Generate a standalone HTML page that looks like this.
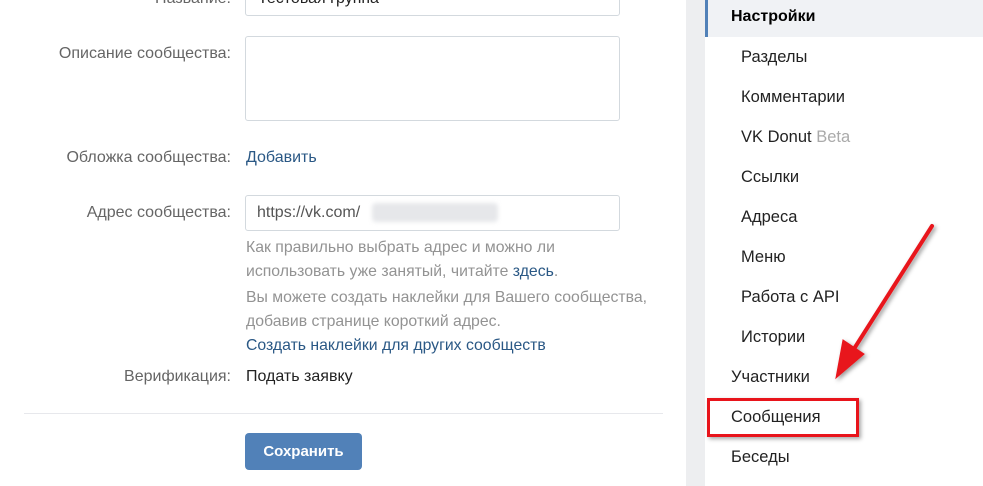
<!DOCTYPE html>
<html><head><meta charset="utf-8"><style>
*{margin:0;padding:0;box-sizing:border-box}
body{width:983px;height:486px;overflow:hidden;background:#fff;font-family:"Liberation Sans",sans-serif;font-size:16px;color:#000;position:relative}
.a{position:absolute;white-space:nowrap}
.lbl{color:#656565;text-align:right;width:231px;left:0}
.box{position:absolute;border:1px solid #d3d9de;border-radius:3px;background:#fff}
.link{color:#2a5885}
.hint{color:#939393;line-height:24px;font-size:15.8px}
.gray{position:absolute;left:686px;top:0;width:19px;height:486px;background:#edeef0}
.menu{position:absolute;left:705px;top:0;width:278px;height:486px;background:#fff}
.mi{position:absolute;font-size:16.5px;color:#222;white-space:nowrap}
</style></head><body>
<div class="box" style="left:245px;top:-20px;width:375px;height:36px"></div>
<div class="a lbl" style="top:-10px">Название:</div>
<div class="a" style="left:258px;top:-10px;color:#222">Тестовая группа</div>

<div class="a lbl" style="top:45px">Описание сообщества:</div>
<div class="box" style="left:245px;top:36px;width:375px;height:85px"></div>

<div class="a lbl" style="top:149px">Обложка сообщества:</div>
<div class="a link" style="left:246px;top:149px">Добавить</div>

<div class="a lbl" style="top:204px">Адрес сообщества:</div>
<div class="box" style="left:245px;top:195px;width:375px;height:36px"></div>
<div class="a" style="left:257px;top:204px;color:#555">https://vk.com/</div>
<div class="a" style="left:372px;top:203px;width:126px;height:19px;background:#e6e7ea;border-radius:4px;filter:blur(2px)"></div>

<div class="a hint" style="left:246px;top:236px">Как правильно выбрать адрес и можно ли<br>использовать уже занятый, читайте <span class="link">здесь</span>.</div>
<div class="a hint" style="left:246px;top:286px">Вы можете создать наклейки для Вашего сообщества,<br>добавив странице короткий адрес.<br><span class="link">Создать наклейки для других сообществ</span></div>

<div class="a lbl" style="top:368px">Верификация:</div>
<div class="a" style="left:246px;top:368px;color:#222">Подать заявку</div>

<div class="a" style="left:24px;top:413px;width:639px;height:1px;background:#e7e8ec"></div>
<div class="a" style="left:245px;top:433px;width:117px;height:37px;background:#5181b8;border-radius:4px;color:#fff;text-align:center;line-height:37px;font-weight:bold;font-size:15px">Сохранить</div>

<div class="gray"></div>
<div class="menu">
<div class="a" style="left:0;top:0;width:278px;height:37px;background:#f0f2f5;border-left:3px solid #5181b8"></div>
<div class="mi" style="left:26px;top:8px;font-weight:bold;color:#000;font-size:16px">Настройки</div>
<div class="mi" style="left:36px;top:48px">Разделы</div>
<div class="mi" style="left:36px;top:88px">Комментарии</div>
<div class="mi" style="left:36px;top:128px">VK Donut <span style="color:#aaa">Beta</span></div>
<div class="mi" style="left:36px;top:168px">Ссылки</div>
<div class="mi" style="left:36px;top:208px">Адреса</div>
<div class="mi" style="left:36px;top:248px">Меню</div>
<div class="mi" style="left:36px;top:288px">Работа с API</div>
<div class="mi" style="left:36px;top:328px">Истории</div>
<div class="mi" style="left:26px;top:368px">Участники</div>
<div class="mi" style="left:26px;top:408px">Сообщения</div>
<div class="mi" style="left:26px;top:448px">Беседы</div>
</div>
<div class="a" style="left:707px;top:398px;width:152px;height:39px;border:3px solid #e8141b;box-shadow:2px 2px 4px rgba(0,0,0,.35)"></div>
<svg class="a" style="left:0;top:0" width="983" height="486">
<defs><filter id="s"><feDropShadow dx="2" dy="2" stdDeviation="2" flood-opacity=".4"/></filter></defs>
<g filter="url(#s)" fill="#e8141b" stroke="#e8141b">
<line x1="932" y1="226" x2="852" y2="352" stroke-width="4" stroke-linecap="round"/>
<polygon points="836,378 843,340 864,354" stroke-width="1"/>
</g>
</svg>
</body></html>
